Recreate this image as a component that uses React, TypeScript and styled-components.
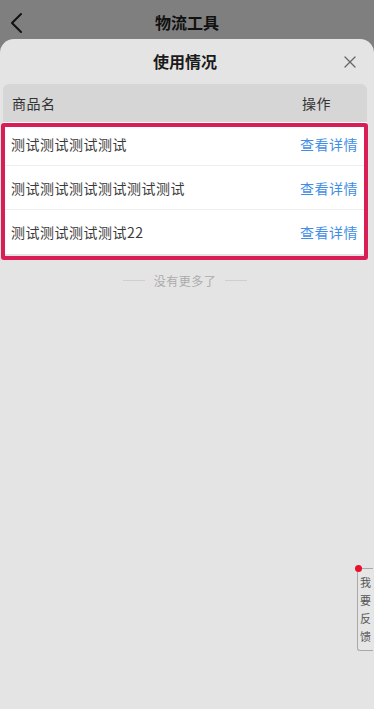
import React from "react";
import styled, { createGlobalStyle } from "styled-components";

const GlobalStyle = createGlobalStyle`
  html, body {
    margin: 0;
    padding: 0;
    background: #7f7f7f;
    font-family: "Noto Sans CJK SC", "Noto Sans", sans-serif;
  }
`;

const Page = styled.div`
  position: relative;
  width: 374px;
  height: 709px;
  overflow: hidden;
  background: #7f7f7f;
  display: flex;
  flex-direction: column;
`;

const NavBar = styled.div`
  height: 39px;
  display: flex;
  align-items: center;
  justify-content: center;
  position: relative;
  flex-shrink: 0;
`;

const NavTitle = styled.div`
  font-size: 16px;
  font-weight: 700;
  color: #111;
  margin-top: 4px;
`;

const BackButton = styled.div`
  position: absolute;
  left: 8px;
  top: 11px;
  width: 18px;
  height: 24px;
`;

const Sheet = styled.div`
  flex: 1;
  background: #e4e4e4;
  border-radius: 14px 14px 0 0;
  display: flex;
  flex-direction: column;
  padding: 0 7px 0 3px;
`;

const SheetHeader = styled.div`
  height: 45px;
  display: flex;
  align-items: center;
  justify-content: center;
  position: relative;
`;

const SheetTitle = styled.div`
  font-size: 16px;
  font-weight: 700;
  color: #1a1a1a;
  margin-top: -2px;
`;

const CloseButton = styled.div`
  position: absolute;
  right: 11px;
  top: 17px;
  width: 12px;
  height: 12px;
  line-height: 0;
`;

const TableHead = styled.div`
  height: 38px;
  background: #d6d6d6;
  border-radius: 6px 6px 0 0;
  display: flex;
  align-items: center;
  justify-content: space-between;
  padding: 0 36px 0 9px;
  font-size: 14px;
  letter-spacing: 0.5px;
  color: #333;
`;

const TableBody = styled.div`
  position: relative;
  background: #fff;
  display: flex;
  flex-direction: column;

  &::after {
    content: "";
    position: absolute;
    left: -2px;
    right: -1px;
    top: 1px;
    bottom: -6px;
    border: 4px solid #d81d57;
    border-radius: 3px;
    pointer-events: none;
  }
`;

const Row = styled.div<{ $last?: boolean }>`
  height: 44px;
  box-sizing: border-box;
  display: flex;
  align-items: center;
  justify-content: space-between;
  padding: 0 9px 0 8px;
  border-bottom: ${(p) => (p.$last ? "none" : "1px solid #efefef")};
  font-size: 14px;
  letter-spacing: 0.5px;
`;

const RowName = styled.span`
  color: #3a3a3a;
`;

const DetailLink = styled.span`
  color: #3f8ee6;
`;

const NoMore = styled.div`
  display: flex;
  align-items: center;
  justify-content: center;
  gap: 9px;
  margin-top: 18px;
  font-size: 12px;
  letter-spacing: 0.5px;
  color: #ababab;
`;

const Line = styled.span`
  width: 22px;
  height: 1px;
  background: #cfcfcf;
`;

const FeedbackTab = styled.div`
  position: absolute;
  right: 1px;
  top: 568px;
  width: 15px;
  padding: 4px 0 5px;
  border: 1px solid #a9a9a9;
  border-right: none;
  border-radius: 3px 0 0 3px;
  background: #e6e6e6;
  display: flex;
  flex-direction: column;
  align-items: center;
  font-size: 11px;
  line-height: 18px;
  color: #555;
`;

const Dot = styled.span`
  position: absolute;
  left: -3px;
  top: -4px;
  width: 7px;
  height: 7px;
  border-radius: 50%;
  background: #e8102a;
`;

const rows = ["测试测试测试测试", "测试测试测试测试测试测试", "测试测试测试测试22"];

export default function App() {
  return (
    <Page>
      <GlobalStyle />
      <NavBar>
        <BackButton>
          <svg width="18" height="24" viewBox="0 0 18 24">
            <path d="M13 3 L4 12 L13 21" fill="none" stroke="#111" strokeWidth="2" strokeLinecap="round" strokeLinejoin="round" />
          </svg>
        </BackButton>
        <NavTitle>物流工具</NavTitle>
      </NavBar>
      <Sheet>
        <SheetHeader>
          <SheetTitle>使用情况</SheetTitle>
          <CloseButton>
            <svg width="12" height="12" viewBox="0 0 12 12">
              <path d="M1 1 L11 11 M11 1 L1 11" stroke="#666" strokeWidth="1.3" strokeLinecap="round" />
            </svg>
          </CloseButton>
        </SheetHeader>
        <TableHead>
          <span>商品名</span>
          <span>操作</span>
        </TableHead>
        <TableBody>
          {rows.map((name, i) => (
            <Row key={i} $last={i === rows.length - 1}>
              <RowName>{name}</RowName>
              <DetailLink>查看详情</DetailLink>
            </Row>
          ))}
        </TableBody>
        <NoMore>
          <Line />
          没有更多了
          <Line />
        </NoMore>
      </Sheet>
      <FeedbackTab>
        <Dot />
        {"我要反馈".split("").map((c) => (
          <span key={c}>{c}</span>
        ))}
      </FeedbackTab>
    </Page>
  );
}
